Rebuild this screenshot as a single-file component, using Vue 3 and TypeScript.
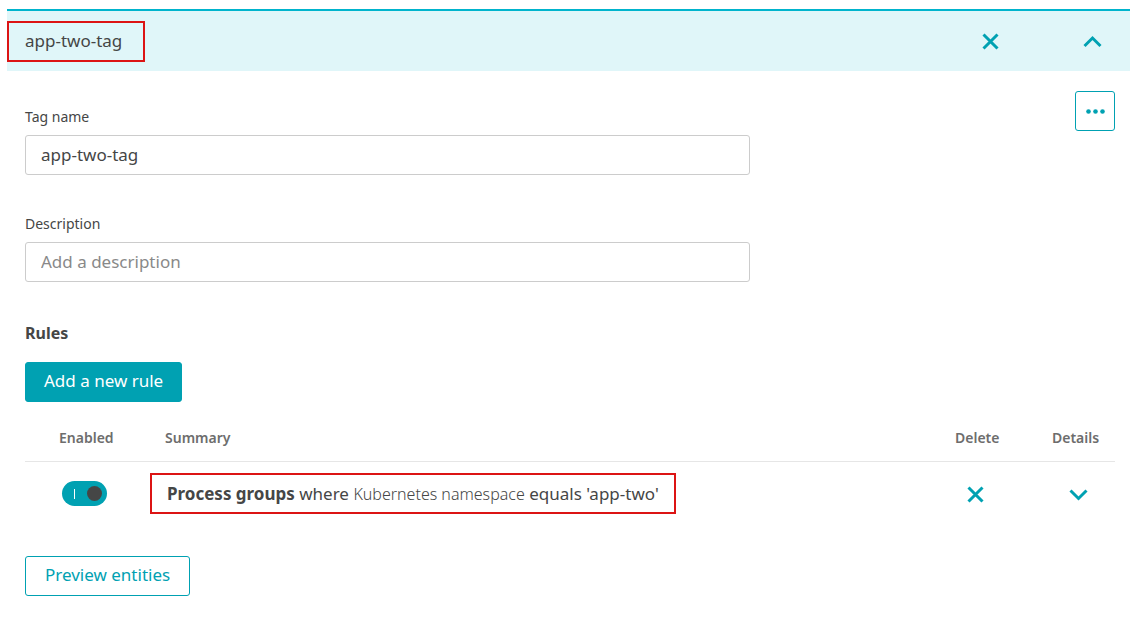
<script setup lang="ts">
import { ref } from 'vue'

interface Rule {
  id: number
  enabled: boolean
  entity: string
  property: string
  condition: string
}

const tagName = ref('app-two-tag')
const description = ref('')
const expanded = ref(true)
const rules = ref<Rule[]>([
  {
    id: 1,
    enabled: true,
    entity: 'Process groups',
    property: 'Kubernetes namespace',
    condition: "equals 'app-two'",
  },
])

function addRule() {
  const id = Math.max(0, ...rules.value.map((r) => r.id)) + 1
  rules.value.push({
    id,
    enabled: true,
    entity: 'Process groups',
    property: 'Kubernetes namespace',
    condition: 'exists',
  })
}

function removeRule(id: number) {
  rules.value = rules.value.filter((r) => r.id !== id)
}
</script>

<template>
  <main class="tag-card">
    <header class="tag-header">
      <h1 class="tag-title marked">{{ tagName }}</h1>
      <div class="header-actions">
        <button class="icon-button" type="button" aria-label="Delete tag">
          <svg class="icon" viewBox="0 0 20 20"><path d="M3.5 3.5 17.5 17.5M17.5 3.5 3.5 17.5" /></svg>
        </button>
        <button
          class="icon-button"
          type="button"
          aria-label="Collapse tag"
          :aria-expanded="expanded"
          @click="expanded = !expanded"
        >
          <svg class="icon" viewBox="0 0 20 20"><path d="M2.5 15 10.5 7 18.5 15" /></svg>
        </button>
      </div>
    </header>

    <section v-if="expanded" class="tag-body">
      <div class="form-row">
        <div class="fields">
          <div class="field">
            <label for="tag-name">Tag name</label>
            <input id="tag-name" v-model="tagName" type="text" />
          </div>
          <div class="field">
            <label for="tag-description">Description</label>
            <input
              id="tag-description"
              v-model="description"
              type="text"
              placeholder="Add a description"
            />
          </div>
        </div>
        <button class="button more" type="button" aria-label="More actions">
          <svg class="dots" viewBox="0 0 20 6">
            <circle cx="3.5" cy="3.5" r="2.3" />
            <circle cx="10.5" cy="3.5" r="2.3" />
            <circle cx="17.5" cy="3.5" r="2.3" />
          </svg>
        </button>
      </div>

      <h2 class="rules-title">Rules</h2>
      <button class="button primary" type="button" @click="addRule">Add a new rule</button>

      <table class="rules">
        <thead>
          <tr>
            <th class="col-enabled" scope="col">Enabled</th>
            <th scope="col">Summary</th>
            <th class="col-delete" scope="col">Delete</th>
            <th class="col-details" scope="col">Details</th>
          </tr>
        </thead>
        <tbody>
          <tr v-for="rule in rules" :key="rule.id">
            <td class="enabled-cell">
              <label class="switch">
                <input v-model="rule.enabled" type="checkbox" role="switch" aria-label="Enabled" />
                <span class="track"></span>
              </label>
            </td>
            <td class="summary-cell">
              <span class="summary marked">
                <strong>{{ rule.entity }}</strong> where
                <span class="property">{{ rule.property }}</span> {{ rule.condition }}
              </span>
            </td>
            <td class="action-cell">
              <button
                class="icon-button"
                type="button"
                aria-label="Delete rule"
                @click="removeRule(rule.id)"
              >
                <svg class="icon" viewBox="0 0 20 20"><path d="M3.5 3.5 17.5 17.5M17.5 3.5 3.5 17.5" /></svg>
              </button>
            </td>
            <td class="action-cell details">
              <button class="icon-button" type="button" aria-label="Show rule details">
                <svg class="icon" viewBox="0 0 20 20"><path d="M1.5 6.5 9.5 14.5 17.5 6.5" /></svg>
              </button>
            </td>
          </tr>
        </tbody>
      </table>

      <button class="button outline" type="button">Preview entities</button>
    </section>
  </main>
</template>

<style>
body {
  background: #fff;
}
</style>

<style scoped>
.tag-card {
  margin: 9px 3px 0 7px;
  color: #454646;
  font-family: 'Noto Sans', 'Open Sans', sans-serif;
  font-size: 17px;
  line-height: 24px;
}

.tag-card * {
  box-sizing: border-box;
}

.tag-header {
  display: flex;
  align-items: center;
  justify-content: space-between;
  height: 62px;
  padding-right: 28px;
  border-top: 2px solid #00b4cd;
  background: #e0f6f9;
}

.marked {
  border: 2px solid #dc1414;
}

.tag-title {
  margin: 0;
  padding: 6px 21px 7px 16px;
  font-size: 17px;
  font-weight: 400;
}

.header-actions {
  display: flex;
  gap: 82px;
}

.icon-button {
  display: block;
  width: 20px;
  height: 20px;
  padding: 0;
  border: 0;
  background: none;
  cursor: pointer;
}

.icon {
  display: block;
  width: 20px;
  height: 20px;
  fill: none;
  stroke: #00a1b2;
  stroke-width: 3;
}

.tag-body {
  padding: 20px 15px 0 18px;
}

.form-row {
  display: flex;
  align-items: flex-start;
  justify-content: space-between;
}

.fields {
  display: grid;
  gap: 37px;
  width: 66.5%;
  padding-top: 14px;
}

.field label {
  display: block;
  margin-bottom: 6px;
  font-size: 14px;
}

.field input {
  display: block;
  width: 100%;
  height: 40px;
  padding: 0 15px 2px;
  border: 1px solid #ccc;
  border-radius: 3px;
  color: inherit;
  font: inherit;
}

.field input::placeholder {
  color: #898989;
  opacity: 1;
}

.button {
  height: 40px;
  padding: 0 18px 2px;
  border: 1px solid #00a1b2;
  border-radius: 3px;
  background: #fff;
  color: #00a1b2;
  font: inherit;
  cursor: pointer;
}

.primary {
  background: #00a1b2;
  color: #fff;
}

.outline {
  padding: 0 19px 2px;
}

.more {
  display: flex;
  align-items: center;
  justify-content: center;
  width: 40px;
  padding: 0;
}

.dots {
  width: 20px;
  height: 6px;
  fill: #00a1b2;
}

.rules-title {
  margin: 39px 0 17px;
  font-size: 16px;
  font-weight: 700;
}

.rules {
  width: 100%;
  margin: 12px 0 42px;
  border-collapse: collapse;
  table-layout: fixed;
}

.rules th {
  padding: 12px 0 11px 15px;
  border-bottom: 1px solid #e6e6e6;
  color: #6d6d6d;
  font-size: 14px;
  font-weight: 600;
  text-align: left;
}

.rules td {
  padding: 11px 0 0;
}

.rules .col-enabled {
  width: 125px;
  padding-left: 34px;
}

.col-delete {
  width: 97px;
}

.col-details {
  width: 78px;
}

.rules .enabled-cell {
  padding-left: 37px;
}

.rules .action-cell {
  padding-left: 25px;
}

.rules .details {
  padding-left: 32px;
}

.switch {
  display: block;
  width: 45px;
  height: 25px;
}

.switch input {
  position: absolute;
  opacity: 0;
}

.track {
  display: flex;
  align-items: center;
  justify-content: space-between;
  height: 25px;
  padding: 0 5px 0 12px;
  border-radius: 13px;
  background: #00a1b2;
  cursor: pointer;
}

.track::before {
  width: 1px;
  height: 10px;
  background: #fff;
  content: '';
}

.track::after {
  width: 15px;
  height: 15px;
  border-radius: 50%;
  background: #454646;
  content: '';
}

.switch input:not(:checked) + .track {
  flex-direction: row-reverse;
  background: #b7b7b7;
}

.summary {
  display: inline-block;
  padding: 7px 15px 6px 15px;
  vertical-align: top;
}

.property {
  font-size: 16px;
  font-weight: 300;
}
</style>
